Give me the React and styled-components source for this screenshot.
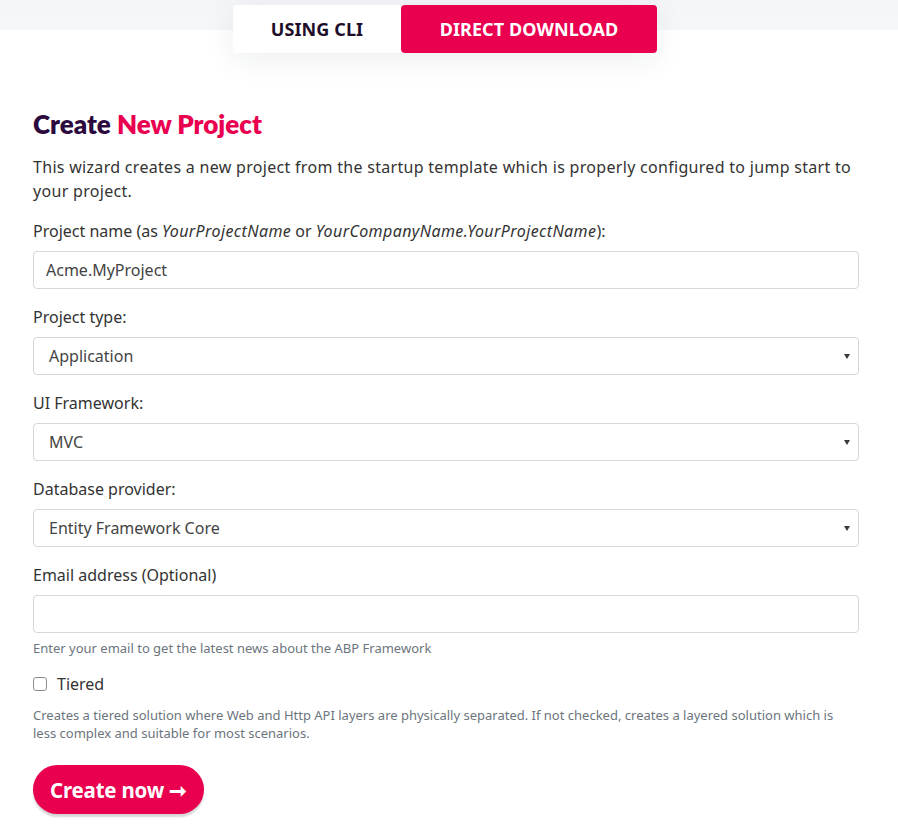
import React, { useState } from "react";
import styled, { createGlobalStyle } from "styled-components";

const GlobalStyle = createGlobalStyle`
  body {
    margin: 0;
    background: #fff;
    font-family: "Noto Sans", "Open Sans", sans-serif;
    color: #2a2a2e;
  }
  * { box-sizing: border-box; }
`;

const Header = styled.div`
  background: linear-gradient(to bottom, #f4f5f8 0, #f6f7f9 30px, #fff 30px);
  padding-top: 5px;
  display: flex;
  justify-content: center;
  padding-right: 8px;
`;

const Tabs = styled.div`
  display: flex;
  border-radius: 4px;
  box-shadow: 0 6px 30px rgba(30, 35, 70, 0.08);
`;

const Tab = styled.button`
  border: none;
  height: 48px;
  padding: 0;
  width: ${(p) => (p.active ? "256px" : "168px")};
  font-family: "Noto Sans", sans-serif;
  font-weight: 700;
  font-size: 18px;
  letter-spacing: 0.1px;
  cursor: pointer;
  border-radius: 4px;
  background: ${(p) => (p.active ? "#e9004f" : "#fff")};
  color: ${(p) => (p.active ? "#fff" : "#1e0d2a")};
`;

const Content = styled.div`
  padding: 55px 39px 40px 33px;
`;

const Title = styled.h1`
  margin: 0 0 15px;
  font-family: "Lato", sans-serif;
  font-weight: 800;
  font-size: 26px;
  line-height: 32px;
  color: #2c0a3e;
  span {
    color: #e9004f;
  }
`;

const Lead = styled.p`
  margin: 0 0 16px;
  font-size: 16px;
  line-height: 24px;
  letter-spacing: 0.3px;
  color: #333;
`;

const Group = styled.div`
  margin-bottom: 16px;
`;

const Label = styled.label`
  display: block;
  font-size: 16px;
  line-height: 24px;
  margin-bottom: 8px;
  color: #333;
  i {
    font-style: italic;
    letter-spacing: 0.4px;
  }
`;

const Input = styled.input`
  display: block;
  width: 100%;
  height: 38px;
  border: 1px solid #d4d7dc;
  border-radius: 4px;
  padding: 0 12px;
  font-family: "Noto Sans", sans-serif;
  font-size: 16px;
  color: #444;
  outline: none;
`;

const SelectBox = styled.div`
  position: relative;
  height: 38px;
  border: 1px solid #d4d7dc;
  border-radius: 4px;
  display: flex;
  align-items: center;
  padding: 0 15px;
  font-size: 16px;
  color: #444;
`;

const Caret = styled.span`
  position: absolute;
  right: 8px;
  top: 16px;
  width: 0;
  height: 0;
  border-left: 3px solid transparent;
  border-right: 3px solid transparent;
  border-top: 5px solid #3a3a3a;
`;

const Help = styled.small`
  display: block;
  margin-top: 6px;
  font-size: 13px;
  line-height: 18px;
  color: #6c757d;
`;

const CheckRow = styled.label`
  display: flex;
  align-items: center;
  gap: 10px;
  font-size: 16px;
  line-height: 24px;
  color: #333;
  margin-top: -1px;
`;

const Box = styled.span`
  width: 14px;
  height: 14px;
  border: 1px solid #8a8f96;
  border-radius: 3px;
  background: ${(p) => (p.checked ? "#e9004f" : "#fff")};
`;

const Note = styled.p`
  margin: 10px 0 23px;
  font-size: 13px;
  line-height: 18px;
  color: #6c757d;
`;

const CreateButton = styled.button`
  height: 49px;
  padding: 0 17px;
  border: none;
  border-radius: 25px;
  background: #e9004f;
  color: #fff;
  font-family: "Noto Sans", sans-serif;
  font-weight: 700;
  font-size: 20.5px;
  letter-spacing: -0.2px;
  box-shadow: 0 3px 2px rgba(0, 0, 0, 0.16);
  cursor: pointer;
`;

const Select = ({ value }) => (
  <SelectBox>
    {value}
    <Caret />
  </SelectBox>
);

const App = () => {
  const [tab, setTab] = useState("download");
  const [tiered, setTiered] = useState(false);

  return (
    <>
      <GlobalStyle />
      <Header>
        <Tabs>
          <Tab active={tab === "cli"} onClick={() => setTab("cli")}>
            USING CLI
          </Tab>
          <Tab active={tab === "download"} onClick={() => setTab("download")}>
            DIRECT DOWNLOAD
          </Tab>
        </Tabs>
      </Header>
      <Content>
        <Title>
          Create <span>New Project</span>
        </Title>
        <Lead>
          This wizard creates a new project from the startup template which is
          properly configured to jump start to your project.
        </Lead>
        <Group>
          <Label>
            Project name (as <i>YourProjectName</i> or{" "}
            <i>YourCompanyName.YourProjectName</i>):
          </Label>
          <Input defaultValue="Acme.MyProject" />
        </Group>
        <Group>
          <Label>Project type:</Label>
          <Select value="Application" />
        </Group>
        <Group>
          <Label>UI Framework:</Label>
          <Select value="MVC" />
        </Group>
        <Group>
          <Label>Database provider:</Label>
          <Select value="Entity Framework Core" />
        </Group>
        <Group>
          <Label>Email address (Optional)</Label>
          <Input />
          <Help>Enter your email to get the latest news about the ABP Framework</Help>
        </Group>
        <CheckRow onClick={() => setTiered(!tiered)}>
          <Box checked={tiered} />
          Tiered
        </CheckRow>
        <Note>
          Creates a tiered solution where Web and Http API layers are physically
          separated. If not checked, creates a layered solution which is less
          complex and suitable for most scenarios.
        </Note>
        <CreateButton>Create now ➞</CreateButton>
      </Content>
    </>
  );
};

export default App;
